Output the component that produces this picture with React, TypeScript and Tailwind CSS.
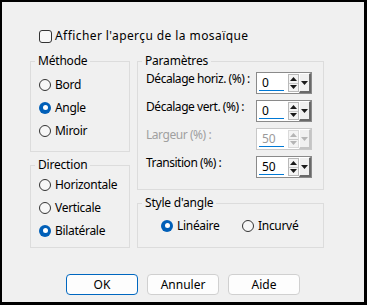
import React from "react";

const Radio = ({ checked, label }: { checked?: boolean; label: string }) => (
  <div className="flex items-center h-[23px] gap-[4px]">
    {checked ? (
      <span className="w-[12px] h-[12px] rounded-full bg-[#005fb8] flex items-center justify-center">
        <span className="w-[5px] h-[5px] rounded-full bg-white" />
      </span>
    ) : (
      <span className="w-[12px] h-[12px] rounded-full border border-[#333333] bg-[#f7f7f7]" />
    )}
    <span className="whitespace-nowrap tracking-[-0.3px]">{label}</span>
  </div>
);

const Group = ({ title, className, children }: { title: string; className: string; children: React.ReactNode }) => (
  <fieldset className={`border border-[#dcdcdc] ${className}`}>
    <legend className="ml-[4px] px-[3px] leading-[16px] tracking-[-0.2px]">{title}</legend>
    {children}
  </fieldset>
);

const Spin = ({ value, disabled }: { value: string; disabled?: boolean }) => {
  const arrow = disabled ? "#b5b5b5" : "#1a1a1a";
  return (
    <div className={`mt-[1px] flex h-[22px] w-[56px] shrink-0 border ${disabled ? "border-[#c8c8c8]" : "border-[#8a8a8a]"} bg-white`}>
      <div className="flex flex-1 flex-col justify-between pl-[5px] pr-[2px] pt-[2px] pb-[2px]">
        <span className={`leading-[15px] ${disabled ? "text-[#9a9a9a]" : "text-black"}`}>{value}</span>
        <span className="h-[2px] w-[25px] -ml-[3px] bg-[#0078d4]" />
      </div>
      <div className={`my-[1px] w-[11px] flex flex-col border ${disabled ? "border-[#dadada]" : "border-[#b9b9b9]"} bg-[#f4f4f4]`}>
        <div className="flex flex-1 items-center justify-center border-b border-[#c9c9c9]">
          <svg width="7" height="4" viewBox="0 0 7 4"><path d="M3.5 0 L7 4 L0 4 Z" fill={arrow} /></svg>
        </div>
        <div className="flex flex-1 items-center justify-center">
          <svg width="7" height="4" viewBox="0 0 7 4"><path d="M0 0 L7 0 L3.5 4 Z" fill={arrow} /></svg>
        </div>
      </div>
      <div className={`w-[12px] flex items-center justify-center bg-[#f0f0f0] border-l border-t border-white border-r-2 border-b-2 ${disabled ? "border-r-[#c4c4c4] border-b-[#c4c4c4]" : "border-r-[#696969] border-b-[#696969]"}`}>
        <svg width="7" height="4" viewBox="0 0 7 4"><path d="M0 0 L7 0 L3.5 4 Z" fill={arrow} /></svg>
      </div>
    </div>
  );
};

const Field = ({ label, value, disabled }: { label: string; value: string; disabled?: boolean }) => (
  <div className="flex h-[28px] items-start">
    <span className={`w-[110px] whitespace-nowrap leading-[16px] tracking-[-0.45px] ${disabled ? "text-[#a0a0a0]" : "text-black"}`}>{label}</span>
    <Spin value={value} disabled={disabled} />
  </div>
);

const Button = ({ label, primary }: { label: string; primary?: boolean }) => (
  <div
    className={`w-[72px] h-[21px] flex items-center justify-center rounded-[4px] bg-[#fdfdfd] border ${primary ? "border-[#0067c0]" : "border-[#d0d0d0]"}`}
  >
    {label}
  </div>
);

export default function App() {
  return (
    <div className="w-[367px] h-[305px] bg-[#f0f0f0] border-black border-t-2 border-l-2 border-r-[3px] border-b-[3px] text-[12px] leading-[16px] text-black font-['Noto_Sans',sans-serif]">
      <div className="mt-[26px] pl-[37px] flex items-center gap-[3px] h-[16px]">
        <span className="w-[13px] h-[13px] rounded-[3px] border border-[#333333] bg-[#f7f7f7]" />
        <span className="whitespace-nowrap tracking-[0.42px]">Afficher l'aperçu de la mosaïque</span>
      </div>

      <div className="mt-[9px] pl-[28px] flex gap-[7px]">
        <div className="w-[100px] flex flex-col gap-[5px]">
          <Group title="Méthode" className="h-[99px]">
            <div className="pl-[8px] pt-[4px]">
              <Radio label="Bord" />
              <Radio label="Angle" checked />
              <Radio label="Miroir" />
            </div>
          </Group>
          <Group title="Direction" className="h-[91px]">
            <div className="pl-[8px]">
              <Radio label="Horizontale" />
              <Radio label="Verticale" />
              <Radio label="Bilatérale" checked />
            </div>
          </Group>
        </div>
        <div className="w-[187px] flex flex-col gap-[5px]">
          <Group title="Paramètres" className="h-[137px]">
            <div className="pl-[8px] pt-[2px]">
              <Field label="Décalage horiz. (%) :" value="0" />
              <Field label="Décalage vert. (%) :" value="0" />
              <Field label="Largeur (%) :" value="50" disabled />
              <Field label="Transition (%) :" value="50" />
            </div>
          </Group>
          <Group title="Style d'angle" className="h-[53px]">
            <div className="flex pl-[23px] pt-[3px]">
              <div className="w-[81px]">
                <Radio label="Linéaire" checked />
              </div>
              <Radio label="Incurvé" />
            </div>
          </Group>
        </div>
      </div>

      <div className="mt-[26px] pl-[64px] flex gap-[9px]">
        <Button label="OK" primary />
        <Button label="Annuler" />
        <Button label="Aide" />
      </div>
    </div>
  );
}
